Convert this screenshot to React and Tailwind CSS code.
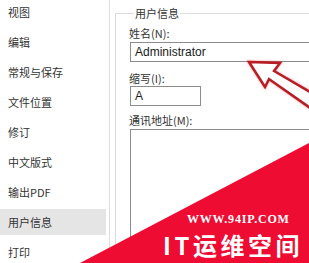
import React from "react";

const cjk = { fontFamily: '"Noto Sans CJK SC", "Noto Sans", sans-serif' };
const latin = { fontFamily: '"Liberation Sans", Arial, sans-serif' };

const items = ["视图", "编辑", "常规与保存", "文件位置", "修订", "中文版式", "输出PDF", "用户信息", "打印"];

export default function App() {
  return (
    <div className="relative w-[309px] h-[263px] overflow-hidden bg-white flex text-[#333]" style={cjk}>
      <div className="w-[109px] shrink-0 flex flex-col gap-[4px] mt-[-1px] pr-[3px]">
        {items.map((t) => (
          <div
            key={t}
            className={
              "h-[26px] shrink-0 flex items-center pl-[8px] text-[11px] leading-[16px] " +
              (t === "用户信息" ? "bg-[#e5e5e5]" : "")
            }
          >
            {t}
          </div>
        ))}
      </div>
      <div className="w-px shrink-0 bg-[#dcdcdc]" />
      <div className="flex-1 min-w-0 pl-[5px]">
        <fieldset className="mt-[5px] w-[260px] h-[300px] border-t border-l border-[#dcdcdc] pl-[13px] flex flex-col">
          <legend className="ml-[5px] px-[1px] text-[11px] leading-[16px] text-[#333]">用户信息</legend>
          <div className="mt-[4px] h-[16px] text-[11px] leading-[16px]">姓名(N):</div>
          <div className="mt-[1px] ml-[1px] h-[20px] w-[220px] border border-[#8c8c8c] flex items-center pl-[4px] text-[12px] text-[#1a1a1a]" style={latin}>
            Administrator
          </div>
          <div className="mt-[8px] h-[16px] text-[11px] leading-[16px]">缩写(I):</div>
          <div className="ml-[1px] h-[20px] w-[71px] border border-[#8c8c8c] flex items-center pl-[4px] text-[12px] text-[#1a1a1a]" style={latin}>
            A
          </div>
          <div className="mt-[6px] h-[16px] text-[11px] leading-[16px]">通讯地址(M):</div>
          <div className="mt-[1px] ml-[1px] h-[160px] w-[220px] border border-[#8c8c8c]" />
        </fieldset>
      </div>

      {/* red arrow annotation */}
      <svg className="absolute inset-0 pointer-events-none" width="309" height="263" viewBox="0 0 309 263">
        <polygon
          points="249,62 280,63 274,71 322,99 316,112 269,79 265,87"
          fill="white"
          stroke="#b81c24"
          strokeWidth="2.5"
          strokeLinejoin="miter"
          style={{ filter: "drop-shadow(0 0 1px rgba(230,60,60,0.6))" }}
        />
        <polygon points="80,263 309,143 309,263" fill="#ef0c32" />
      </svg>

      {/* watermark */}
      <div
        className="absolute left-[187px] top-[213px] text-white text-[12px] leading-[12px] font-bold tracking-[0.8px]"
        style={{ fontFamily: '"Liberation Serif", "Times New Roman", serif' }}
      >
        WWW.94IP.COM
      </div>
      <div className="absolute left-[163px] top-[232px] text-white text-[24px] leading-[26px] font-bold tracking-[3.5px] whitespace-nowrap" style={cjk}>
        IT运维空间
      </div>
    </div>
  );
}
